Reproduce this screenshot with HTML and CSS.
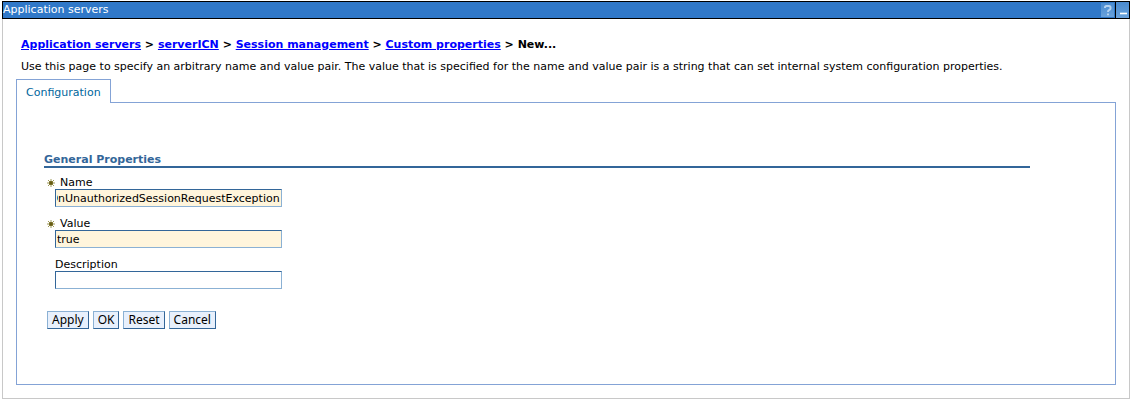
FILE: index.html
```html
<!DOCTYPE html>
<html lang="en">
<head>
  <meta charset="UTF-8">
  <meta name="viewport" content="width=device-width, initial-scale=1.0">
  <title>Application servers</title>
  <link rel="stylesheet" href="styles.css">
</head>
<body>
  <div class="portlet">
    <!-- Title bar -->
    <div class="title-bar">
      <span class="title">Application servers</span>
      <button type="button" class="title-button" aria-label="Help">
        <svg width="12" height="14" viewBox="0 0 12 14"><path d="M3 5V4.500Q3 3 4.500 3H7Q8.500 3 8.500 4.500V5.500Q8.500 6.500 7 7.200Q6 7.700 6 9M6 10.500V12.300" fill="none" stroke="#b4d2f0" stroke-width="2"/></svg>
      </button>
      <button type="button" class="title-button" aria-label="Minimize">
        <svg width="12" height="14" viewBox="0 0 12 14"><path d="M3 9h7v3H3z" fill="#8fbce6"/><path d="M3 10h7v1H3z" fill="#fff"/></svg>
      </button>
    </div>

    <div class="portlet-body">
      <h1 class="breadcrumb">
        <a href="#">Application servers</a> &gt; <a href="#">serverICN</a> &gt; <a href="#">Session management</a> &gt; <a href="#">Custom properties</a> &gt; New...
      </h1>
      <p class="description">Use this page to specify an arbitrary name and value pair. The value that is specified for the name and value pair is a string that can set internal system configuration properties.</p>

      <!-- Tabs -->
      <div class="tabs">
        <a href="#configuration" class="tab">Configuration</a>
      </div>

      <div id="configuration" class="panel">
        <h2 class="section-title">General Properties</h2>
        <form class="properties">
          <div class="field">
            <label for="name"><svg class="required-icon" width="8" height="8" viewBox="0 0 8 8"><path d="M4 0v8M0 4h8M1 1l6 6M7 1L1 7" stroke="#a09a58"/><circle cx="4" cy="4" r="2" fill="#665c12"/></svg>Name</label>
            <input type="text" id="name" class="required" value="InvalidateOnUnauthorizedSessionRequestException" required>
          </div>
          <div class="field">
            <label for="value"><svg class="required-icon" width="8" height="8" viewBox="0 0 8 8"><path d="M4 0v8M0 4h8M1 1l6 6M7 1L1 7" stroke="#a09a58"/><circle cx="4" cy="4" r="2" fill="#665c12"/></svg>Value</label>
            <input type="text" id="value" class="required" value="true" required>
          </div>
          <div class="field">
            <label for="description" class="optional">Description</label>
            <input type="text" id="description">
          </div>
          <div class="actions">
            <button type="button" class="button">Apply</button>
            <button type="button" class="button">OK</button>
            <button type="reset" class="button">Reset</button>
            <button type="button" class="button">Cancel</button>
          </div>
        </form>
      </div>
    </div>
  </div>

  <script>
    // Keep the end of a long property name in view
    const nameInput = document.getElementById('name');
    nameInput.scrollLeft = nameInput.scrollWidth;
  </script>
</body>
</html>
```

FILE: styles.css
```css
* {
  box-sizing: border-box;
}
body {
  margin: 1px 1px 16px 2px;
  background: #fff;
  color: #000;
  font-family: "DejaVu Sans", Verdana, sans-serif;
  font-size: 11px;
  line-height: 14px;
}

/* Title bar */
.title-bar {
  display: flex;
  align-items: center;
  height: 18px;
  gap: 1px;
  background: #3078c8;
  border: 1px solid #000;
}
.title {
  flex: 1;
  color: #fff;
  line-height: 16px;
}
.title-button {
  display: flex;
  align-items: center;
  justify-content: center;
  width: 13px;
  height: 14px;
  padding: 0;
  border: 0;
  background: linear-gradient(#4a8bd0, #69a2dc);
  cursor: pointer;
}
.title-button + .title-button {
  width: 14px;
  height: 16px;
  border-left: 1px solid #000;
}

/* Body */
.portlet-body {
  padding: 19px 13px 13px;
  border: 1px solid #c8c8c8;
  border-top: 0;
}
.breadcrumb {
  margin: 0 0 8px;
  padding-left: 5px;
  font-size: 11px;
  line-height: 14px;
}
.breadcrumb a {
  color: #00f;
}
.description {
  margin: 0 0 5px;
  padding-left: 5px;
}

/* Tabs and panel */
.tabs {
  display: flex;
}
.tab {
  height: 24px;
  padding: 6px 9px 0;
  margin-bottom: -1px;
  border: 1px solid #84a3d6;
  border-bottom: 0;
  background: #fff;
  color: #00669c;
  text-decoration: none;
}
.panel {
  padding: 51px 85px 55px 27px;
  border: 1px solid #84a3d6;
}
.section-title {
  margin: 0 0 9px;
  border-bottom: 2px solid #336699;
  color: #336699;
  font-size: 11px;
  line-height: 12px;
}

/* Form */
.field {
  margin-bottom: 11px;
  padding-left: 11px;
}
.field label {
  display: flex;
  align-items: center;
  gap: 5px;
  margin-left: -8px;
  line-height: 12px;
}
.field label.optional {
  margin-left: 0;
}
.field input {
  display: block;
  width: 227px;
  height: 18px;
  padding: 0 1px;
  border: 1px solid;
  border-color: #336699 #8bb1d4 #8bb1d4 #336699;
  background: #fff;
  font: inherit;
}
.field input.required {
  background: #fff5dc;
}
.actions {
  display: flex;
  gap: 4px;
  padding: 11px 0 0 3px;
}
.button {
  height: 18px;
  padding: 0 4px;
  border: 1px solid;
  border-color: #8bb1d4 #336699 #336699 #8bb1d4;
  background: #e8f0fc;
  color: #000;
  font-family: "Noto Sans", Tahoma, sans-serif;
  font-size: 12px;
  line-height: 16px;
  cursor: pointer;
}
```
